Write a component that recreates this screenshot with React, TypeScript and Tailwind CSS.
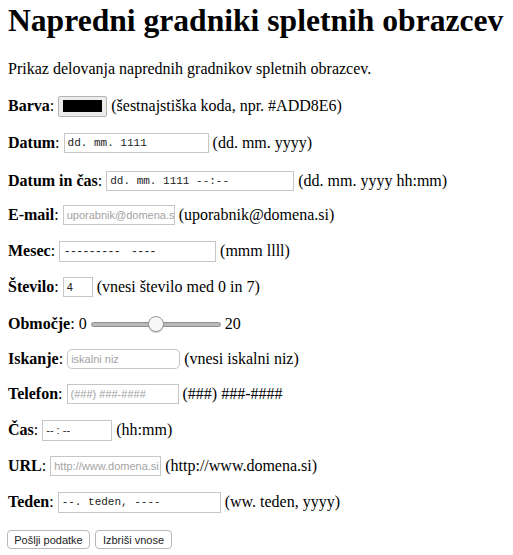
import React from "react";

const serif = "font-['Liberation_Serif','Times_New_Roman',serif]";
const sans = "font-['Liberation_Sans',Arial,sans-serif]";
const mono = "font-['Liberation_Mono','Courier_New',monospace]";

function Row({ label, mt, children }: { label: string; mt: string; children: React.ReactNode }) {
  return (
    <div className={`flex h-[22px] items-center whitespace-nowrap ${mt}`}>
      <b>{label}</b>
      <span>:&nbsp;</span>
      {children}
    </div>
  );
}

function Box({ w, className = "", children }: { w: string; className?: string; children?: React.ReactNode }) {
  return (
    <div
      className={`flex h-[20px] shrink-0 items-center overflow-hidden border border-[#c6c6c6] bg-white px-[3px] text-[11px] ${w} ${className}`}
    >
      {children}
    </div>
  );
}

export default function App() {
  return (
    <div className={`${serif} px-2 text-[16px] leading-[18px] text-black`}>
      <h1 className="whitespace-nowrap pt-[2px] text-[31.6px] leading-[37px] font-bold">
        Napredni gradniki spletnih obrazcev
      </h1>
      <p className="mt-[21px]">Prikaz delovanja naprednih gradnikov spletnih obrazcev.</p>

      <div className="mt-[16px] flex h-[24px] items-center whitespace-nowrap">
        <b>Barva</b>
        <span>:&nbsp;</span>
        <div className="flex h-[21px] w-[49px] items-center justify-center rounded-[2px] border border-[#b3b3b3] bg-[#ececec]">
          <div className="h-[12px] w-[39px] bg-black" />
        </div>
        <span>&nbsp;(šestnajstiška koda, npr. #ADD8E6)</span>
      </div>

      <Row label="Datum" mt="mt-[14px]">
        <Box w="w-[145px]" className={`${mono} text-[#222]`}>dd. mm. 1111</Box>
        <span>&nbsp;(dd. mm. yyyy)</span>
      </Row>

      <Row label="Datum in čas" mt="mt-[16px]">
        <Box w="w-[188px]" className={`${mono} text-[#222]`}>dd. mm. 1111 --:--</Box>
        <span>&nbsp;(dd. mm. yyyy hh:mm)</span>
      </Row>

      <Row label="E-mail" mt="mt-[12px]">
        <Box w="w-[112px]" className={`${sans} text-[#a3a3a3]`}>uporabnik@domena.si</Box>
        <span>&nbsp;(uporabnik@domena.si)</span>
      </Row>

      <Row label="Mesec" mt="mt-[14px]">
        <Box w="w-[157px]" className={`${sans} h-[21px] pl-[5px] text-[13px] tracking-[1.9px] text-[#222]`}>
          ---------&nbsp;&nbsp;----
        </Box>
        <span>&nbsp;(mmm llll)</span>
      </Row>

      <Row label="Število" mt="mt-[14px]">
        <Box w="w-[30px]" className={`${sans} text-[#222]`}>4</Box>
        <span>&nbsp;(vnesi število med 0 in 7)</span>
      </Row>

      <Row label="Območje" mt="mt-[15px]">
        <span>0&nbsp;</span>
        <div className="relative flex h-[16px] w-[130px] items-center">
          <div className="h-[5px] w-full rounded-full border border-[#8f8f8f] bg-[#b9b9b9]" />
          <div className="absolute left-[57px] top-0 h-[16px] w-[16px] rounded-full border border-[#9a9a9a] bg-[#f7f7f7] shadow-[0_1px_1px_rgba(0,0,0,0.2)]" />
        </div>
        <span>&nbsp;20</span>
      </Row>

      <Row label="Iskanje" mt="mt-[13px]">
        <Box w="w-[113px]" className={`${sans} rounded-[5px] text-[#a3a3a3]`}>iskalni niz</Box>
        <span>&nbsp;(vnesi iskalni niz)</span>
      </Row>

      <Row label="Telefon" mt="mt-[13px]">
        <Box w="w-[112px]" className={`${sans} text-[#a3a3a3]`}>(###) ###-####</Box>
        <span>&nbsp;(###) ###-####</span>
      </Row>

      <Row label="Čas" mt="mt-[14px]">
        <Box w="w-[70px]" className={`${sans} h-[21px] text-[#222]`}>--&nbsp;:&nbsp;--</Box>
        <span>&nbsp;(hh:mm)</span>
      </Row>

      <Row label="URL" mt="mt-[14px]">
        <Box w="w-[111px]" className={`${sans} text-[#a3a3a3]`}>http://www.domena.si</Box>
        <span>&nbsp;(http://www.domena.si)</span>
      </Row>

      <Row label="Teden" mt="mt-[14px]">
        <Box w="w-[163px]" className={`${mono} h-[21px] text-[#222]`}>--. teden, ----</Box>
        <span>&nbsp;(ww. teden, yyyy)</span>
      </Row>

      <div className={`${sans} mt-[17px] flex gap-[5px] text-[11px]`}>
        <button className="h-[19px] w-[83px] -ml-[1px] rounded-[4px] border border-[#b8b8b8] bg-white text-[#222]">
          Pošlji podatke
        </button>
        <button className="h-[19px] w-[77px] rounded-[4px] border border-[#b8b8b8] bg-white text-[#222]">
          Izbriši vnose
        </button>
      </div>
    </div>
  );
}
